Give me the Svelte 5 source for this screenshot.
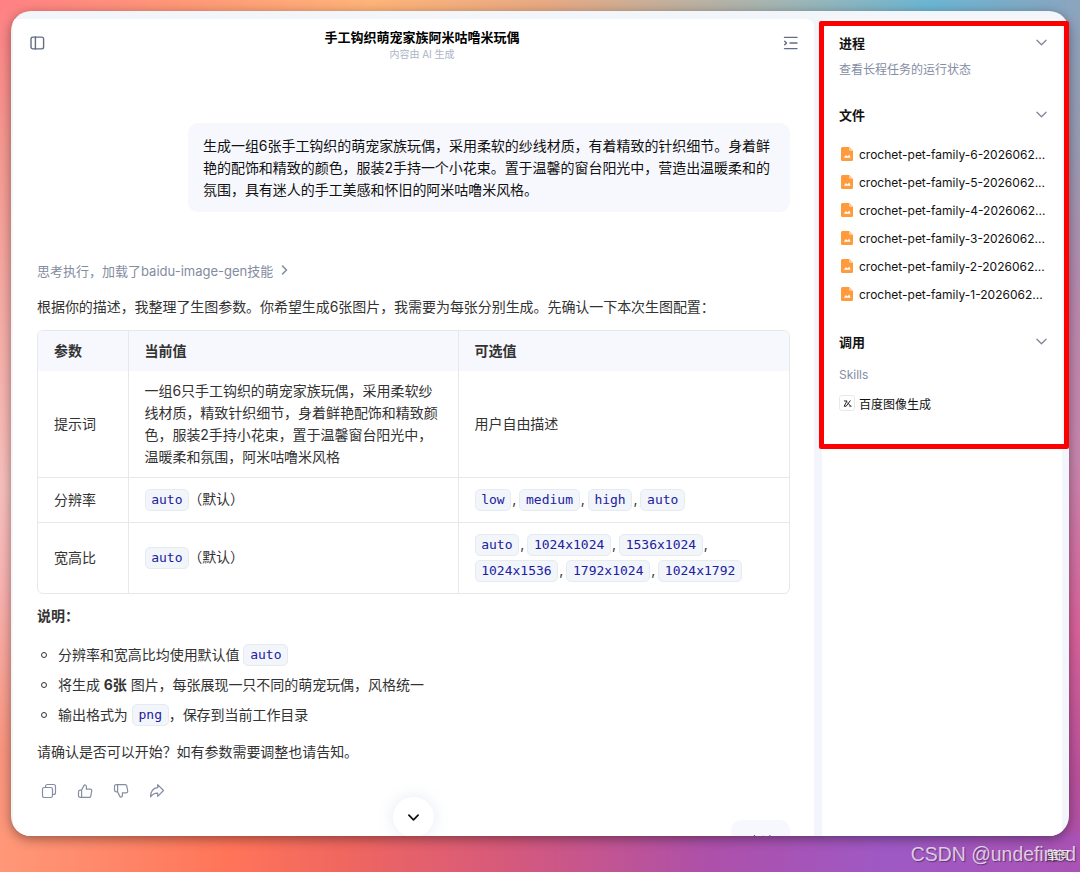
<script>
    let files = [6, 5, 4, 3, 2, 1].map((n) => `crochet-pet-family-${n}-2026062...`);
    let resolutions = ["low", "medium", "high", "auto"];
    let ratios = [
        ["auto", "1024x1024", "1536x1024"],
        ["1024x1536", "1792x1024", "1024x1792"],
    ];
</script>

{#snippet chevron()}
    <svg class="chevron" viewBox="0 0 12 12"><path d="M1 3.5 6 8.5 11 3.5" /></svg>
{/snippet}

<div class="desktop">
    <div class="window">
        <main>
            <header>
                <svg class="icon" viewBox="0 0 16 16"><rect x="1" y="2.1" width="12.6" height="11.8" rx="1.8" /><path d="M5.4 2v12" /></svg>
                <div class="heading">
                    <h1>手工钩织萌宠家族阿米咕噜米玩偶</h1>
                    <small>内容由 AI 生成</small>
                </div>
                <svg class="icon" viewBox="0 0 16 16"><path d="M2.500 2.400h12.500M8 8h7M2.500 13.600h12.500M2.700 6.200l1.800 1.800-1.800 1.800" /></svg>
            </header>

            <div class="prompt">
                <div>生成一组6张手工钩织的萌宠家族玩偶，采用柔软的纱线材质，有着精致的针织细节。身着鲜</div>
                <div>艳的配饰和精致的颜色，服装2手持一个小花束。置于温馨的窗台阳光中，营造出温暖柔和的</div>
                <div>氛围，具有迷人的手工美感和怀旧的阿米咕噜米风格。</div>
            </div>

            <div class="thinking">
                <span>思考执行，加载了baidu-image-gen技能</span>
                <svg viewBox="0 0 10 12"><path d="M2.500 2 6.500 6 2.500 10" /></svg>
            </div>
            <p class="intro">根据你的描述，我整理了生图参数。你希望生成6张图片，我需要为每张分别生成。先确认一下本次生图配置：</p>

            <div class="table">
                <div class="row head">
                    <div>参数</div>
                    <div>当前值</div>
                    <div>可选值</div>
                </div>
                <div class="row description">
                    <div>提示词</div>
                    <div>
                        <span class="line">一组6只手工钩织的萌宠家族玩偶，采用柔软纱</span>
                        <span class="line">线材质，精致针织细节，身着鲜艳配饰和精致颜</span>
                        <span class="line">色，服装2手持小花束，置于温馨窗台阳光中，</span>
                        <span class="line">温暖柔和氛围，阿米咕噜米风格</span>
                    </div>
                    <div>用户自由描述</div>
                </div>
                <div class="row resolution">
                    <div>分辨率</div>
                    <div><span class="codes"><code>auto</code><span class="default">（默认）</span></span></div>
                    <div>
                        <span class="codes">
                            {#each resolutions as value, i}
                                <code>{value}</code>{#if i < resolutions.length - 1}<span class="comma">,</span>{/if}
                            {/each}
                        </span>
                    </div>
                </div>
                <div class="row ratio">
                    <div>宽高比</div>
                    <div><span class="codes"><code>auto</code><span class="default">（默认）</span></span></div>
                    <div>
                        {#each ratios as group, g}
                            <span class="codes">
                                {#each group as value, i}
                                    <code>{value}</code>{#if g === 0 || i < group.length - 1}<span class="comma">,</span>{/if}
                                {/each}
                            </span>
                        {/each}
                    </div>
                </div>
            </div>

            <p class="notes-title">说明：</p>
            <ul>
                <li><span>分辨率和宽高比均使用默认值</span><code>auto</code></li>
                <li><span>将生成 <b>6张</b> 图片，每张展现一只不同的萌宠玩偶，风格统一</span></li>
                <li><span>输出格式为</span><code>png</code><span>，保存到当前工作目录</span></li>
            </ul>
            <p>请确认是否可以开始？如有参数需要调整也请告知。</p>

            <div class="actions">
                <svg viewBox="0 0 16 16"><rect x="1.5" y="4.5" width="10" height="10" rx="1.8" /><path d="M4.5 4.3V3.5a2 2 0 0 1 2-2h6a2 2 0 0 1 2 2v6a2 2 0 0 1-2 2h-.8" /></svg>
                <svg viewBox="0 0 16 16"><path d="M4.500 7.200 6.900 2.600C7.500 1.500 9.400 1.800 9.400 3.600V6.200h3.700c1.100 0 1.800.8 1.600 1.800l-.9 5c-.2.900-.8 1.400-1.600 1.400H3.200c-1 0-1.700-.7-1.700-1.700V8.900c0-1 .7-1.700 1.700-1.700zM4.600 7.200v7.200" /></svg>
                <svg viewBox="0 0 16 16"><path d="M4.500 8.800 6.900 13.400C7.500 14.500 9.400 14.200 9.400 12.400V9.800h3.700c1.100 0 1.800-.8 1.600-1.800l-.9-5c-.2-.9-.8-1.400-1.600-1.400H3.200c-1 0-1.700.7-1.700 1.700v3.800c0 1 .7 1.700 1.700 1.700zM4.600 8.800V1.600" /></svg>
                <svg viewBox="0 0 16 16"><path d="M8.700 1.700v3C4.200 5.100 1.700 8.300 1.500 13.800c2-2.500 4-3.700 7.200-3.600v3.100l5.800-5.800z" /></svg>
            </div>

            <div class="next-message"><span>确认</span></div>
            <button class="scroll-down" aria-label="scroll down">{@render chevron()}</button>
        </main>

        <aside>
            <section class="progress">
                <h2>进程 {@render chevron()}</h2>
                <p>查看长程任务的运行状态</p>
            </section>
            <section class="files">
                <h2>文件 {@render chevron()}</h2>
                {#each files as file}
                    <div class="file">
                        <svg viewBox="0 0 12 14"><path class="sheet" d="M1.6 0H8l4 4v8.4c0 .9-.7 1.6-1.6 1.6H1.6C.7 14 0 13.300 0 12.400V1.600C0 .7.7 0 1.600 0z" /><path class="fold" d="M8 0l4 4H9.200C8.500 4 8 3.500 8 2.800z" /><path class="peaks" d="M2.800 10.800 5 8l1.500 1.600L8.200 7.500l1.400 3.300z" /></svg>
                        <span>{file}</span>
                    </div>
                {/each}
            </section>
            <section>
                <h2>调用 {@render chevron()}</h2>
                <p class="skills">Skills</p>
                <div class="skill">
                    <i><svg viewBox="0 0 10 10"><path d="M1.500 2.200h3L1.500 7.500M3.500 8l4.500-6M5.500 4.500l2.500 3M1.500 8h1.500M7.500 8h1.500" /></svg></i>
                    <span>百度图像生成</span>
                </div>
            </section>
        </aside>
    </div>

    <div class="highlight"></div>
    <div class="desk-label">壁间</div>
    <div class="watermark">CSDN @undefined</div>
</div>

<style>
    :global(body) {
        overflow: hidden;
    }
    .desktop {
        position: relative;
        box-sizing: border-box;
        width: 1080px;
        height: 872px;
        padding: 11px;
        overflow: hidden;
        font-family: Inter, "Noto Sans CJK SC", sans-serif;
        font-size: 14px;
        color: #333;
        background:
            linear-gradient(90deg, #ff8184 0, #ff9977 190px, #ffb479 370px, #e7aa84 550px, #a0b6b6 790px, #6cb6d3 930px, #8ca4be 1080px) top / 100% 14px no-repeat,
            linear-gradient(90deg, #ff9878 0, #ff7459 230px, #ef6660 350px, #d5597c 510px, #ad50aa 710px, #9e59c5 890px, #aa52b5 1080px) bottom / 100% 39px no-repeat,
            linear-gradient(180deg, #ff8184 0, #f69a91 150px, #f8c0bd 490px, #f9b4b3 580px, #fa957f 750px, #ff9878 872px) left / 50% 100% no-repeat,
            linear-gradient(180deg, #8ca4be 0, #999bb3 150px, #bb88ad 310px, #c985ad 460px, #d9629a 630px, #b9509b 780px, #aa52b5 872px) right / 50% 100% no-repeat;
    }
    .window {
        box-sizing: border-box;
        display: grid;
        grid-template-columns: 801px 240px;
        column-gap: 8px;
        width: 1058px;
        height: 825px;
        padding: 8px 7px 0 2px;
        overflow: hidden;
        border-radius: 20px;
        background: #f2f5fa;
        box-shadow: 0 3px 12px #0006;
    }
    main {
        position: relative;
        box-sizing: border-box;
        padding: 0 24px;
        overflow: hidden;
        background: #fff;
        border-radius: 0 8px 0 0;
        letter-spacing: -.04px;
    }
    svg {
        display: block;
        fill: none;
        stroke: currentColor;
        stroke-linecap: round;
        stroke-linejoin: round;
    }
    header {
        display: grid;
        grid-template-columns: 16px 1fr 16px;
        height: 104px;
        margin: 0 -8px 0 -7px;
    }
    .icon {
        width: 16px;
        height: 16px;
        margin-top: 16px;
        color: #626d84;
        stroke-width: 1.4;
    }
    .heading {
        padding: 8px 0 0 16px;
        text-align: center;
        letter-spacing: 0;
    }
    h1 {
        margin: 0;
        font-size: 13px;
        line-height: 20px;
        font-weight: 600;
        color: #000;
    }
    small {
        display: block;
        font-size: 10px;
        line-height: 14px;
        color: #abb4c8;
    }
    .prompt {
        box-sizing: border-box;
        width: 602px;
        height: 89px;
        margin-left: auto;
        padding: 12px 15px;
        border-radius: 10px;
        background: #f7f8fd;
        line-height: 22px;
        color: #111;
        white-space: nowrap;
    }
    .thinking {
        display: flex;
        align-items: center;
        gap: 7px;
        height: 20px;
        margin-top: 48px;
        font-size: 13px;
        letter-spacing: 0;
        color: #848ca0;
    }
    .thinking svg {
        width: 10px;
        height: 12px;
        stroke-width: 1.6;
    }
    p {
        margin: 0;
        line-height: 22px;
    }
    .intro {
        margin-top: 16px;
        white-space: nowrap;
        letter-spacing: -.06px;
    }
    .table {
        box-sizing: border-box;
        width: 753px;
        height: 264px;
        margin-top: 12px;
        overflow: hidden;
        border: 1px solid #e6e8ec;
        border-radius: 6px;
    }
    .row {
        display: grid;
        grid-template-columns: 90px 330px 331px;
        border-top: 1px solid #e6e8ec;
        box-sizing: border-box;
    }
    .row > div {
        display: flex;
        flex-direction: column;
        justify-content: center;
        padding-left: 16px;
        line-height: 22px;
        white-space: nowrap;
    }
    .row > div + div {
        border-left: 1px solid #e6e8ec;
        padding-left: 15.5px;
    }
    .head {
        height: 40px;
        border: 0;
        background: #f7f8fd;
        font-weight: 600;
    }
    .description {
        height: 106px;
        border: 0;
    }
    .resolution {
        height: 45px;
    }
    .ratio {
        height: 71px;
    }
    .codes {
        display: flex;
        align-items: center;
        height: 26px;
    }
    code {
        box-sizing: border-box;
        display: inline-block;
        height: 22px;
        padding: 0 5.7px;
        border: 1px solid #e6eaf1;
        border-radius: 5px;
        background: #f2f5fa;
        font-family: "DejaVu Sans Mono", monospace;
        font-size: 13px;
        line-height: 20px;
        letter-spacing: 0;
        color: #2020a0;
    }
    .comma {
        width: 8px;
        text-indent: 1px;
        margin-top: -2px;
    }
    .default {
        margin: -2px 0 0 -1px;
    }
    .notes-title {
        margin-top: 11px;
        font-weight: 600;
    }
    ul {
        margin: 13px 0 11px;
        padding: 0;
        list-style: none;
    }
    li {
        display: flex;
        align-items: center;
        height: 30px;
    }
    li span {
        margin-top: -2px;
    }
    li::before {
        content: "";
        box-sizing: border-box;
        width: 6px;
        height: 6px;
        margin: 0 11px 0 4px;
        border: 1px solid #333;
        border-radius: 50%;
    }
    li code {
        margin-left: 4px;
    }
    .actions {
        display: flex;
        gap: 20px;
        margin: 20px 0 0 4px;
        color: #858da3;
    }
    .actions svg {
        width: 16px;
        height: 16px;
        stroke-width: 1.2;
    }
    .next-message {
        position: absolute;
        top: 801px;
        right: 24px;
        width: 59px;
        height: 50px;
        border-radius: 10px;
        background: #f7f8fd;
        text-align: center;
        line-height: 44px;
    }
    .scroll-down {
        position: absolute;
        top: 778px;
        left: 380px;
        display: grid;
        place-items: center;
        width: 41px;
        height: 40px;
        padding: 0;
        border: 0;
        border-radius: 50%;
        background: #fff;
        box-shadow: 0 0 16px #6c85bd2b;
        color: #111;
    }
    .scroll-down .chevron {
        stroke-width: 1.9;
    }
    .chevron {
        width: 11px;
        height: 11px;
        stroke-width: 1.4;
    }
    aside {
        box-sizing: border-box;
        padding: 13px 15.5px 0 17px;
        background: #fff;
    }
    h2 {
        display: flex;
        align-items: center;
        justify-content: space-between;
        height: 20px;
        margin: 0;
        font-size: 13px;
        font-weight: 600;
        color: #111;
    }
    h2 .chevron {
        color: #7d879b;
    }
    aside p {
        margin-top: 8px;
        font-size: 12px;
        line-height: 20px;
        color: #858da3;
    }
    .progress {
        height: 72px;
    }
    .files {
        height: 227px;
    }
    .files h2 {
        margin-bottom: 16px;
    }
    .file {
        display: flex;
        align-items: center;
        gap: 6px;
        height: 28px;
        margin-left: 2px;
        font-size: 12px;
        color: #111;
        white-space: nowrap;
    }
    .file svg {
        width: 12px;
        height: 14px;
        stroke: none;
    }
    .sheet {
        fill: #ff9b3d;
    }
    .fold {
        fill: #ffc994;
    }
    .peaks {
        fill: #fff;
    }
    aside .skills {
        margin-top: 14px;
    }
    .skill {
        display: flex;
        align-items: center;
        gap: 4px;
        height: 20px;
        margin-top: 8px;
        font-size: 12px;
        color: #111;
    }
    .skill i {
        display: grid;
        place-items: center;
        width: 14px;
        height: 14px;
        border: 1px solid #e6e8ec;
        border-radius: 3px;
    }
    .skill svg {
        width: 9px;
        height: 9px;
    }
    .highlight {
        position: absolute;
        top: 21px;
        left: 819px;
        box-sizing: border-box;
        width: 250px;
        height: 428px;
        border: 5px solid #f00;
        border-radius: 2px;
    }
    .desk-label {
        position: absolute;
        right: 11px;
        bottom: 9px;
        color: #fff;
        font-size: 11px;
        line-height: 16px;
        text-shadow: 0 1px 2px #000;
    }
    .watermark {
        position: absolute;
        right: 4px;
        bottom: 6px;
        color: #ffffffbb;
        font-family: "Liberation Sans", Arial, sans-serif;
        font-size: 19.4px;
        line-height: 24px;
        text-shadow: 1px 1px 1px #0006;
    }
</style>
